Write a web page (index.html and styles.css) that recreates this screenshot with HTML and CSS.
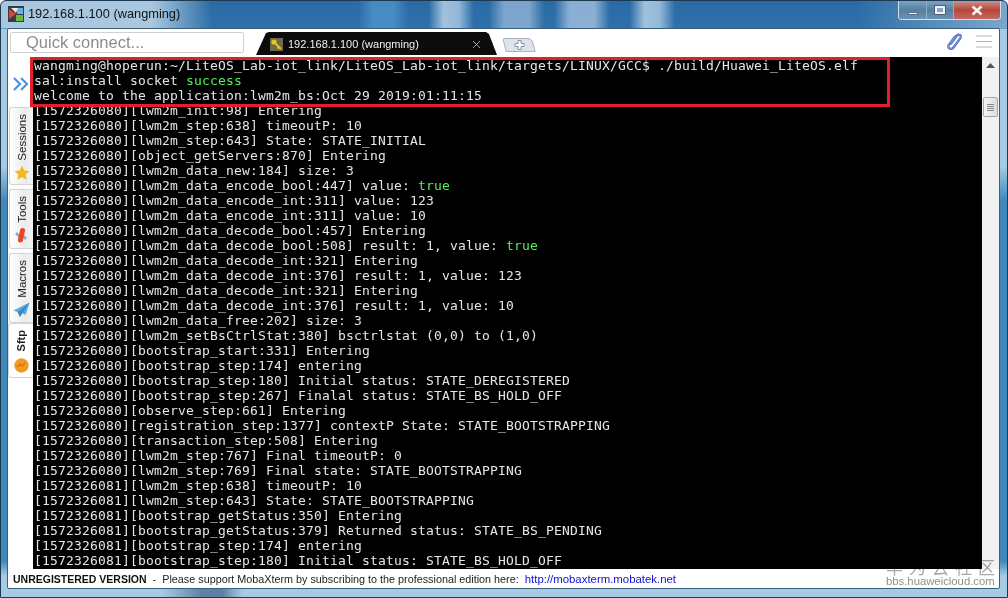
FILE: index.html
```html
<!DOCTYPE html>
<html lang="en">
<head>
<meta charset="utf-8">
<title>192.168.1.100 (wangming)</title>
<link rel="stylesheet" href="styles.css">
</head>
<body>
<div class="window">
  <header class="titlebar">
    <svg class="app-icon" width="16" height="16" viewBox="0 0 16 16"><rect width="16" height="16" fill="#3a3a44"/><path d="M1 3l7 5-7 5z" fill="#d8453a"/><path d="M9 2h6v6H9z" fill="#5fb4e8"/><path d="M8 9h7v6H8z" fill="#6db54a"/><path d="M3 2l5 5 2-5z" fill="#e8e8e8"/></svg>
    <span class="title">192.168.1.100 (wangming)</span>
    <div class="caption">
      <span class="cap cap-min"><i></i></span>
      <span class="cap cap-max"><i></i></span>
      <span class="cap cap-close">
        <svg width="14" height="11" viewBox="0 0 14 11"><path d="M2.500 1.500l9 8M11.500 1.500l-9 8" stroke="#f4f4f4" stroke-width="2.600"/></svg>
      </span>
    </div>
  </header>
  <div class="client">
    <div class="toolbar">
      <div class="quick">Quick connect...</div>
      <div class="tab">
        <span class="tab-icon"><svg width="13" height="13" viewBox="0 0 13 13"><circle cx="4" cy="4" r="2.600" fill="#f0c020"/><path d="M5 5l6 6M9 9l-1.500 1.500" stroke="#f0c020" stroke-width="1.800"/></svg></span>
        <span class="tab-label">192.168.1.100 (wangming)</span>
        <svg class="tab-close" width="9" height="9" viewBox="0 0 9 9"><path d="M1 1l7 7M8 1l-7 7" stroke="#b0b0b0" stroke-width=".9"/></svg>
      </div>
      <div class="tab-new"><svg width="11" height="11" viewBox="0 0 11 11"><path d="M4 .5h3v3h3v3H7v3H4v-3H1v-3h3z" fill="#fff" stroke="#8a94a0"/></svg></div>
      <div class="toolbar-end">
        <svg width="18" height="19" viewBox="0 0 18 19"><path d="M5 11.500L11 3.500c1.500-2 5-.2 3.500 2.300L7.500 15.500c-2 2.700-6.500 .7-4.800-2.500L9 4.500" fill="none" stroke="#3f5fc0" stroke-width="2.200" stroke-linecap="round"/><path d="M5 11.500L11 3.500c1.500-2 5-.2 3.500 2.300L7.500 15.500c-2 2.700-6.500 .7-4.800-2.500L9 4.500" fill="none" stroke="#a9bdf0" stroke-width=".7" stroke-linecap="round"/></svg>
        <svg class="menu" width="16" height="13" viewBox="0 0 16 13"><path d="M0 1h16M0 6.500h16M0 12h16" stroke="#b4b4b4" stroke-width="1"/></svg>
      </div>
    </div>
    <div class="main">
      <aside class="side">
        <svg class="chevrons" width="16" height="14" viewBox="0 0 16 14"><path d="M1 1l6 6-6 6M8 1l6 6-6 6" fill="none" stroke="#3d8fe0" stroke-width="2"/></svg>
        <div class="vtab vtab-sessions">
          <span class="vlabel">Sessions</span>
          <svg width="16" height="16" viewBox="0 0 15 15"><path d="M7.500 .5l2.100 4.600 5 .5-3.800 3.300 1.100 5-4.400-2.600-4.400 2.600 1.100-5L.4 5.600l5-.5z" fill="#f2b81e"/></svg>
        </div>
        <div class="vtab vtab-tools">
          <span class="vlabel">Tools</span>
          <svg width="15" height="17" viewBox="0 0 15 17"><path d="M2 6l4 4M9 9l3 3" stroke="#9aa8c8" stroke-width="2.500"/><path d="M8.500 3.500L6.500 13" stroke="#ee4422" stroke-width="5" stroke-linecap="round"/></svg>
        </div>
        <div class="vtab vtab-macros">
          <span class="vlabel">Macros</span>
          <svg width="17" height="16" viewBox="0 0 16 15"><path d="M15.500 .5L.5 8l4 1.500L6.500 14l2-3.500 3.500 1.500z" fill="#5aa8e0"/><path d="M15.500 .5L4.500 9.500l2 4.500z" fill="#3d86c6"/></svg>
        </div>
        <div class="vtab vtab-sftp">
          <span class="vlabel">Sftp</span>
          <svg width="15" height="15" viewBox="0 0 15 15"><circle cx="7.500" cy="7.500" r="7.200" fill="#f09a1e"/><path d="M3 9l3-3 2 2 3-3" fill="none" stroke="#d07810" stroke-width="1.500"/></svg>
        </div>
      </aside>
      <pre class="term">wangming@hoperun:~/LiteOS_Lab-iot_link/LiteOS_Lab-iot_link/targets/LINUX/GCC$ ./build/Huawei_LiteOS.elf
sal:install socket <b class="ok">success</b>
welcome to the application:lwm2m_bs:Oct 29 2019:01:11:15
[1572326080][lwm2m_init:98] Entering
[1572326080][lwm2m_step:638] timeoutP: 10
[1572326080][lwm2m_step:643] State: STATE_INITIAL
[1572326080][object_getServers:870] Entering
[1572326080][lwm2m_data_new:184] size: 3
[1572326080][lwm2m_data_encode_bool:447] value: <b class="ok">true</b>
[1572326080][lwm2m_data_encode_int:311] value: 123
[1572326080][lwm2m_data_encode_int:311] value: 10
[1572326080][lwm2m_data_decode_bool:457] Entering
[1572326080][lwm2m_data_decode_bool:508] result: 1, value: <b class="ok">true</b>
[1572326080][lwm2m_data_decode_int:321] Entering
[1572326080][lwm2m_data_decode_int:376] result: 1, value: 123
[1572326080][lwm2m_data_decode_int:321] Entering
[1572326080][lwm2m_data_decode_int:376] result: 1, value: 10
[1572326080][lwm2m_data_free:202] size: 3
[1572326080][lwm2m_setBsCtrlStat:380] bsctrlstat (0,0) to (1,0)
[1572326080][bootstrap_start:331] Entering
[1572326080][bootstrap_step:174] entering
[1572326080][bootstrap_step:180] Initial status: STATE_DEREGISTERED
[1572326080][bootstrap_step:267] Finalal status: STATE_BS_HOLD_OFF
[1572326080][observe_step:661] Entering
[1572326080][registration_step:1377] contextP State: STATE_BOOTSTRAPPING
[1572326080][transaction_step:508] Entering
[1572326080][lwm2m_step:767] Final timeoutP: 0
[1572326080][lwm2m_step:769] Final state: STATE_BOOTSTRAPPING
[1572326081][lwm2m_step:638] timeoutP: 10
[1572326081][lwm2m_step:643] State: STATE_BOOTSTRAPPING
[1572326081][bootstrap_getStatus:350] Entering
[1572326081][bootstrap_getStatus:379] Returned status: STATE_BS_PENDING
[1572326081][bootstrap_step:174] entering
[1572326081][bootstrap_step:180] Initial status: STATE_BS_HOLD_OFF</pre>
      <div class="scrollbar">
        <svg class="arrow" width="9" height="5" viewBox="0 0 9 5"><path d="M4.500 0L9 5H0z" fill="#555"/></svg>
        <div class="thumb"><i></i><i></i><i></i><i></i></div>
      </div>
      <div class="redbox"></div>
    </div>
    <footer class="status">
      <strong>UNREGISTERED VERSION</strong><span class="dash">-</span><span class="nag">Please support MobaXterm by subscribing to the professional edition here:</span><a class="link">http://mobaxterm.mobatek.net</a>
    </footer>
    <div class="watermark">
      <div class="wm-cn">华为云社区</div>
      <div class="wm-en">bbs.huaweicloud.com</div>
    </div>
  </div>
</div>
</body>
</html>
```
FILE: styles.css
```css
* { box-sizing: border-box; }
html, body { margin: 0; height: 100%; overflow: hidden; background: #fff; }
.window {
  width: 1008px; height: 598px; display: flex; flex-direction: column;
  padding: 0 7px 8px 6px; border-radius: 6px 6px 0 0;
  font-family: "Liberation Sans", sans-serif;
  background:
    linear-gradient(90deg, rgba(190,215,232,.85) 0, rgba(190,215,232,.85) 15%, rgba(190,215,232,0) 21%, rgba(90,170,225,0) 35.500%, rgba(90,160,215,.6) 37%, rgba(90,160,215,.6) 39%, rgba(255,255,255,0) 40.500%, rgba(255,255,255,0) 42.500%, rgba(190,215,235,.8) 44%, rgba(190,215,235,.7) 45.500%, rgba(255,255,255,0) 47%, rgba(255,255,255,0) 48.500%, rgba(190,210,235,.55) 50%, rgba(190,210,235,.55) 52.500%, rgba(255,255,255,0) 54%, rgba(255,255,255,0) 55%, rgba(190,210,235,.65) 56.500%, rgba(190,210,235,.65) 59%, rgba(255,255,255,0) 60.500%, rgba(255,255,255,0) 62.500%, rgba(190,215,235,.8) 64%, rgba(190,215,235,.7) 65.500%, rgba(255,255,255,0) 67%, rgba(255,255,255,0) 85%, rgba(160,190,215,.7) 100%) 0 0 / 100% 27px no-repeat,
    linear-gradient(90deg, rgba(30,70,110,0) 16%, rgba(30,70,110,.55) 20%, rgba(30,70,110,.55) 22%, rgba(30,70,110,0) 24%) 0 100% / 100% 8px no-repeat,
    linear-gradient(#2a6aa5, #2f70aa 27px, #a6cce4 28px, #a6cce4 165px, #3f88bb 200px, #3f88bb 560px, #a6cce4 575px);
  border: 1px solid #1d3a52;
}
.titlebar { height: 27px; flex: none; display: flex; align-items: center; padding-left: 1px; }
.app-icon { flex: none; margin-top: -2px; }
.title { margin-left: 4px; margin-top: -2px; font-size: 12.800px; color: #111; }
.caption { margin-left: auto; margin-right: -1px; align-self: flex-start; display: flex; height: 19px; border: 1px solid #cfe0ec; border-top: 0; border-radius: 0 0 4px 4px; overflow: hidden; }
.cap { display: flex; align-items: center; justify-content: center; height: 100%; border-right: 1px solid #8fb0c6; }
.cap-min { width: 28px; background: linear-gradient(#7fa2bf, #54809f 50%, #6b93b3); }
.cap-min i { width: 10px; height: 3px; margin-top: 6px; background: #eef2f6; border: 1px solid #5a6f85; }
.cap-max { width: 27px; background: linear-gradient(#7fa2bf, #54809f 50%, #6b93b3); }
.cap-max i { width: 10px; height: 8px; border: 2px solid #eef2f6; outline: 1px solid #4b6179; background: #88a6c2; }
.cap-close { width: 46px; border-right: 0; background: linear-gradient(#c9938a, #b8453a 50%, #c46a60); }
.client { position: relative; flex: 1; min-height: 0; display: flex; flex-direction: column; background: #fff; border: 1px solid #3d5f7e; border-radius: 2px; }
.toolbar { height: 28px; flex: none; display: flex; align-items: flex-end; padding: 0 0 2px 2px; }
.quick { width: 234px; height: 21px; margin-bottom: 2px; padding-left: 15px; border: 1px solid #d0d0d0; border-radius: 2px; font-size: 16.500px; line-height: 18px; color: #8c8c8c; }
.tab { width: 241px; height: 23px; margin-left: 12px; display: flex; align-items: center; padding: 1px 12px 0 14px; background: #0c0c0c; clip-path: polygon(0 100%, 10px 1px, 13px 0, 230px 0, 233px 2px, 100% 100%); }
.tab-icon { width: 13px; height: 13px; flex: none; display: flex; background: #6b6b4a; }
.tab-label { margin-left: 5px; font-size: 11px; color: #f0f0f0; flex: 1; white-space: nowrap; }
.tab-close { flex: none; margin-right: 4px; }
.tab-new { width: 30px; height: 14px; margin: 0 0 3px 7px; display: flex; align-items: center; justify-content: center; background: #dce3ea; border: 1px solid #aab4be; border-radius: 3px 5px 1px 1px; transform: skewX(14deg); }
.tab-new svg { transform: skewX(-14deg); }
.toolbar-end { margin-left: auto; display: flex; align-items: center; gap: 12px; padding: 0 7px 1px 0; align-self: center; }
.main { position: relative; flex: 1; min-height: 0; display: flex; }
.side { width: 25px; flex: none; display: flex; flex-direction: column; align-items: flex-end; background: #fff; }
.chevrons { align-self: center; margin: 20px 0 16px 0; flex: none; }
.vtab { width: 24px; display: flex; flex-direction: column; align-items: center; justify-content: space-between; padding: 6px 0 4px; margin-bottom: 4px; background: linear-gradient(90deg, #fff, #ebebeb 65%, #f4f4f4); border: 1px solid #d4d4d4; border-right: 0; border-radius: 3px 0 0 3px; }
.vlabel { writing-mode: vertical-rl; transform: rotate(180deg); font-size: 11.500px; color: #222; }
.vtab-sessions { height: 78px; padding-bottom: 3px; }
.vtab-tools { height: 60px; }
.vtab-macros { height: 70px; margin-bottom: 0; }
.vtab-sftp { width: 25px; height: 55px; padding-top: 6px; background: #fff; }
.vtab-sftp .vlabel { font-weight: 700; font-size: 11px; }
.term { flex: 1; min-width: 0; margin: 0; padding: 1px 0 0 1px; overflow: hidden; background: #000; color: #e6e6e6; font-family: "DejaVu Sans Mono", monospace; font-size: 13px; letter-spacing: .174px; line-height: 15px; white-space: pre; }
.ok { font-weight: 400; color: #55f055; }
.scrollbar { width: 17px; flex: none; position: relative; display: flex; flex-direction: column; align-items: center; padding-top: 6px; background: #f1f1f1; }
.thumb { width: 15px; height: 20px; margin-top: 29px; display: flex; flex-direction: column; align-items: center; justify-content: center; gap: 1px; background: linear-gradient(90deg, #f5f5f5, #dcdcdc); border: 1px solid #a8a8a8; border-radius: 2px; }
.thumb i { width: 7px; height: 1px; background: #888; }
.redbox { position: absolute; left: 22px; top: 0; width: 860px; height: 50px; border: 3px solid #e0202c; pointer-events: none; }
.status { height: 19px; flex: none; display: flex; align-items: center; padding: 1px 0 0 5px; font-size: 10.800px; color: #222; white-space: nowrap; }
.status strong { font-weight: 700; font-size: 10.500px; color: #111; }
.dash { margin: 0 6px; }
.link { margin-left: 6px; font-size: 11.400px; color: #1010d0; }
.watermark { position: absolute; right: 5px; bottom: 0; width: 108px; text-align: center; color: #8f8f8f; mix-blend-mode: multiply; }
.wm-cn { font-family: "Noto Sans CJK SC", sans-serif; font-size: 17px; line-height: 16px; letter-spacing: 6px; margin-right: -6px; white-space: nowrap; color: #a8a8a8; }
.wm-en { font-size: 11.300px; line-height: 13px; white-space: nowrap; }
```
